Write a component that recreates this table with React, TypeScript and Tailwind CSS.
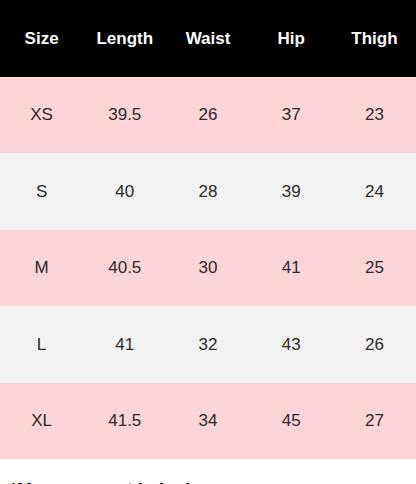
const HEAD = ["Size", "Length", "Waist", "Hip", "Thigh"];

const ROWS = [
  ["XS", "39.5", "26", "37", "23"],
  ["S", "40", "28", "39", "24"],
  ["M", "40.5", "30", "41", "25"],
  ["L", "41", "32", "43", "26"],
  ["XL", "41.5", "34", "45", "27"],
];

export default function App() {
  return (
    <div className="w-[416px] h-[484px] overflow-hidden bg-white font-['Liberation_Sans',Arial,sans-serif]">
      <div className="grid grid-cols-5 h-[76.5px] bg-black text-white font-bold text-[17px]">
        {HEAD.map((h) => (
          <div key={h} className="flex items-center justify-center">{h}</div>
        ))}
      </div>

      {ROWS.map((r, i) => (
        <div
          key={r[0]}
          className={`grid grid-cols-5 h-[76.5px] text-[17px] text-[#2a2a2a] ${i % 2 === 0 ? "bg-[#fdd4d8]" : "bg-[#f2f2f2]"}`}
        >
          {r.map((c, j) => (
            <div key={j} className="flex items-center justify-center">{c}</div>
          ))}
        </div>
      ))}

      <p className="mt-[20px] px-[10px] text-[18px] font-bold text-black leading-tight">
        *Measurement in inches
      </p>
    </div>
  );
}
